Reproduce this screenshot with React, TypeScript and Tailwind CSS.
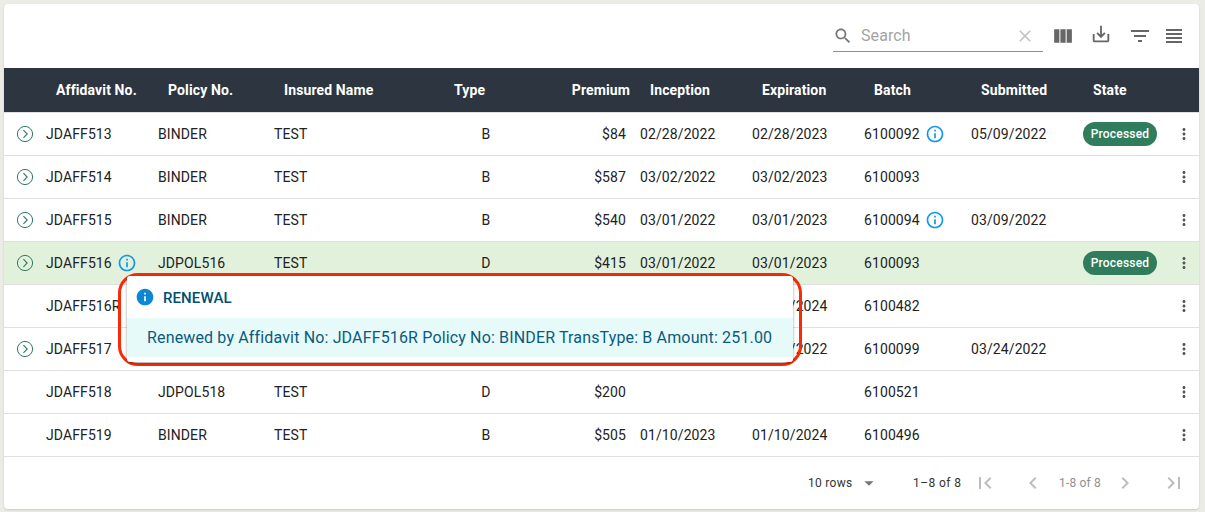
const font = { fontFamily: 'Roboto, sans-serif' };

const paths = {
  columns: 'M10 18h5V5h-5v13zm-6 0h5V5H4v13zM16 5v13h5V5h-5z',
  save: 'M19 12v7H5v-7H3v7c0 1.1.9 2 2 2h14c1.1 0 2-.9 2-2v-7h-2zm-6 .67l2.59-2.58L17 11.5l-5 5-5-5 1.41-1.41L11 12.67V3h2z',
  filter: 'M10 18h4v-2h-4v2zM3 6v2h18V6H3zm3 7h12v-2H6v2z',
  headline: 'M4 15h16v-2H4v2zm0 4h16v-2H4v2zm0-8h16V9H4v2zm0-6v2h16V5H4z',
  more: 'M12 8c1.1 0 2-.9 2-2s-.9-2-2-2-2 .9-2 2 .9 2 2 2zm0 2c-1.1 0-2 .9-2 2s.9 2 2 2 2-.9 2-2-.9-2-2-2zm0 6c-1.1 0-2 .9-2 2s.9 2 2 2 2-.9 2-2-.9-2-2-2z',
  search: 'M15.5 14h-.79l-.28-.27C15.41 12.59 16 11.11 16 9.5 16 5.91 13.09 3 9.5 3S3 5.91 3 9.5 5.91 16 9.5 16c1.61 0 3.09-.59 4.23-1.57l.27.28v.79l5 4.99L20.49 19l-4.99-5zm-6 0C7.01 14 5 11.99 5 9.5S7.01 5 9.5 5 14 7.01 14 9.5 11.99 14 9.5 14z',
  clear: 'M19 6.41L17.59 5 12 10.59 6.41 5 5 6.41 10.59 12 5 17.59 6.41 19 12 13.41 17.59 19 19 17.59 13.41 12 19 6.41z',
  first: 'M18.41 16.59L13.82 12l4.59-4.59L17 6l-6 6 6 6zM6 6h2v12H6z',
  last: 'M5.59 7.41L10.18 12l-4.59 4.59L7 18l6-6-6-6zM16 6h2v12h-2z',
  left: 'M15.41 7.41L14 6l-6 6 6 6 1.41-1.41L10.83 12z',
  right: 'M10 6L8.59 7.41 13.17 12l-4.58 4.58L10 18l6-6z',
  drop: 'M7 10l5 5 5-5z',
  info: 'M11 7h2v2h-2zm0 4h2v6h-2zm1-9C6.48 2 2 6.48 2 12s4.48 10 10 10 10-4.48 10-10S17.52 2 12 2zm0 18c-4.41 0-8-3.59-8-8s3.59-8 8-8 8 3.59 8 8-3.59 8-8 8z',
  infoFilled: 'M12 2C6.48 2 2 6.48 2 12s4.48 10 10 10 10-4.48 10-10S17.52 2 12 2zm1 15h-2v-6h2v6zm0-8h-2V7h2v2z',
};

function Icon({ d, className }: { d: string; className: string }) {
  return (
    <svg viewBox="0 0 24 24" fill="currentColor" className={className}>
      <path d={d} />
    </svg>
  );
}

function ExpandIcon() {
  return (
    <svg viewBox="0 0 18 18" fill="none" stroke="#2f7d5d" className="w-[18px] h-[18px]">
      <circle cx="9" cy="9" r="7.6" strokeWidth="1" />
      <path d="M7.4 5.2 11.2 9l-3.8 3.8" strokeWidth="1.1" />
    </svg>
  );
}

const gridCols = 'grid grid-cols-[42px_112px_116px_172px_80px_114px_112px_112px_107px_112px_87px_29px] items-center';

type Row = {
  expand?: boolean;
  aff: string;
  affInfo?: boolean;
  policy: string;
  type: string;
  premium: string;
  inception?: string;
  expiration?: string;
  batch: string;
  batchInfo?: boolean;
  submitted?: string;
  processed?: boolean;
  active?: boolean;
};

const rows: Row[] = [
  { expand: true, aff: 'JDAFF513', policy: 'BINDER', type: 'B', premium: '$84', inception: '02/28/2022', expiration: '02/28/2023', batch: '6100092', batchInfo: true, submitted: '05/09/2022', processed: true },
  { expand: true, aff: 'JDAFF514', policy: 'BINDER', type: 'B', premium: '$587', inception: '03/02/2022', expiration: '03/02/2023', batch: '6100093' },
  { expand: true, aff: 'JDAFF515', policy: 'BINDER', type: 'B', premium: '$540', inception: '03/01/2022', expiration: '03/01/2023', batch: '6100094', batchInfo: true, submitted: '03/09/2022' },
  { expand: true, aff: 'JDAFF516', affInfo: true, policy: 'JDPOL516', type: 'D', premium: '$415', inception: '03/01/2022', expiration: '03/01/2023', batch: '6100093', processed: true, active: true },
  { aff: 'JDAFF516R', policy: 'BINDER', type: 'B', premium: '$251', inception: '03/01/2023', expiration: '03/01/2024', batch: '6100482' },
  { expand: true, aff: 'JDAFF517', policy: 'BINDER', type: 'B', premium: '$300', inception: '03/24/2021', expiration: '03/24/2022', batch: '6100099', submitted: '03/24/2022' },
  { aff: 'JDAFF518', policy: 'JDPOL518', type: 'D', premium: '$200', batch: '6100521' },
  { aff: 'JDAFF519', policy: 'BINDER', type: 'B', premium: '$505', inception: '01/10/2023', expiration: '01/10/2024', batch: '6100496' },
];

const InfoBtn = () => <Icon d={paths.info} className="w-[20px] h-[20px] text-[#0f96ee] shrink-0" />;

function RenewalPopover() {
  return (
    <div className="absolute left-[114px] top-[31px] z-10 w-[684px] h-[93px] rounded-[20px] border-[3px] border-[#fb2a06] pl-[6px]">
      <div className="w-[666px] h-[86px] bg-white shadow-[0_1px_3px_rgba(0,0,0,0.4)] rounded-[3px]">
        <div className="h-[42px] flex items-center pl-[8px] gap-[8px]">
          <Icon d={paths.infoFilled} className="w-[20px] h-[20px] text-[#0b87d4]" />
          <span className="pt-[2px] text-[15px] font-medium text-[#004f72]">RENEWAL</span>
        </div>
        <div className="h-[39px] bg-[#e7fafa] pl-[20px] flex items-center text-[16px] tracking-[0.15px] text-[#0a5a7f] whitespace-nowrap">
          Renewed by Affidavit No: JDAFF516R Policy No: BINDER TransType: B Amount: 251.00
        </div>
      </div>
    </div>
  );
}

export default function App() {
  const headers = [
    { label: '', cls: '' },
    { label: 'Affidavit No.', cls: 'pl-[10px]' },
    { label: 'Policy No.', cls: 'pl-[10px]' },
    { label: 'Insured Name', cls: 'pl-[10px]' },
    { label: 'Type', cls: 'pl-[8px]' },
    { label: 'Premium', cls: 'text-right pr-[10px]' },
    { label: 'Inception', cls: 'pl-[10px]' },
    { label: 'Expiration', cls: 'pl-[10px]' },
    { label: 'Batch', cls: 'pl-[10px]' },
    { label: 'Submitted', cls: 'pl-[10px]' },
    { label: 'State', cls: 'pl-[10px]' },
    { label: '', cls: '' },
  ];

  return (
    <div className="h-[512px] w-[1205px] overflow-hidden bg-[#ecece6] p-1 pr-[6px]" style={font}>
      <div className="relative h-[505px] w-[1195px] rounded-[4px] bg-white shadow-[0_1px_2px_rgba(0,0,0,0.15)]">
        {/* Toolbar */}
        <div className="h-[64px] flex items-start justify-end pr-[13px]">
          <div className="mt-[19px] w-[210px] h-[29px] border-b border-[#8f8f8f] flex items-center pl-0 pr-[8px] pb-[3px] mr-[7px]">
            <Icon d={paths.search} className="w-[20px] h-[20px] text-[#757575]" />
            <span className="ml-[8px] flex-1 text-[16px] tracking-[0.1px] text-[#a3a3a3]">Search</span>
            <Icon d={paths.clear} className="w-[20px] h-[20px] text-[#c4c4c4]" />
          </div>
          <Icon d={paths.columns} className="mt-[20px] w-[25px] h-[25px] text-[#666666] mr-[15px]" />
          <Icon d={paths.save} className="mt-[19px] w-[22px] h-[22px] text-[#666666] mr-[16px]" />
          <Icon d={paths.filter} className="mt-[20px] w-[24px] h-[24px] text-[#666666] mr-[10px]" />
          <Icon d={paths.headline} className="mt-[20px] w-[24px] h-[24px] text-[#666666]" />
        </div>

        {/* Header */}
        <div className={`${gridCols} h-[45px] border-b border-[#e0e0e0] bg-[#2d3540] text-[14px] font-bold tracking-[0.12px] text-white`}>
          {headers.map((h, i) => (
            <div key={i} className={h.cls}>{h.label}</div>
          ))}
        </div>

        {/* Rows */}
        {rows.map((r) => (
          <div
            key={r.aff}
            className={`${gridCols} relative h-[43px] border-b border-[#e0e0e0] text-[14px] tracking-[0.1px] text-[#222222] ${r.active ? 'bg-[#e2f1dc]' : ''}`}
          >
            <div className="pl-[12px] flex items-center">{r.expand && <ExpandIcon />}</div>
            <div className="flex items-center gap-[5px] whitespace-nowrap">
              {r.aff}
              {r.affInfo && <InfoBtn />}
            </div>
            <div>{r.policy}</div>
            <div>TEST</div>
            <div className="text-center">{r.type}</div>
            <div className="text-right pr-[14px]">{r.premium}</div>
            <div>{r.inception}</div>
            <div>{r.expiration}</div>
            <div className="flex items-center gap-[5px]">
              {r.batch}
              {r.batchInfo && <InfoBtn />}
            </div>
            <div>{r.submitted}</div>
            <div>
              {r.processed && (
                <span className="flex h-[24px] w-[74px] items-center justify-center rounded-full bg-[#2f7d5d] text-[12px] font-medium tracking-[0.2px] text-white">
                  Processed
                </span>
              )}
            </div>
            <div className="flex items-center">
              <Icon d={paths.more} className="w-[18px] h-[18px] text-[#555555] ml-[5px]" />
            </div>
            {r.active && <RenewalPopover />}
          </div>
        ))}

        {/* Pagination */}
        <div className="h-[52px] pb-[1px] flex items-center text-[12px]">
          <div className="ml-[804px] w-[52px] tracking-[0.3px] text-[#333333]">10 rows</div>
          <Icon d={paths.drop} className="w-[22px] h-[22px] text-[#757575] -ml-[2px]" />
          <div className="ml-[33px] w-[56px] tracking-[0.4px] text-[#333333]">1–8 of 8</div>
          <Icon d={paths.first} className="ml-[4px] w-[24px] h-[24px] text-[#bdbdbd]" />
          <Icon d={paths.left} className="ml-[24px] w-[24px] h-[24px] text-[#bdbdbd]" />
          <div className="ml-[11px] w-[48px] text-center tracking-[0.2px] text-[#8f8f8f]">1-8 of 8</div>
          <Icon d={paths.right} className="ml-[9px] w-[24px] h-[24px] text-[#bdbdbd]" />
          <Icon d={paths.last} className="ml-[25px] w-[24px] h-[24px] text-[#bdbdbd]" />
        </div>
      </div>
    </div>
  );
}
